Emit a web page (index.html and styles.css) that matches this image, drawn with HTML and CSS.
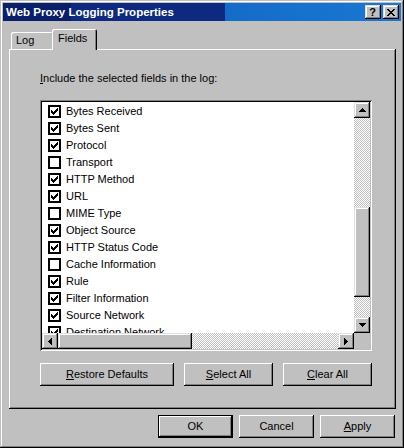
FILE: index.html
```html
<!DOCTYPE html>
<html>
<head>
<meta charset="utf-8">
<title>Web Proxy Logging Properties</title>
<link rel="stylesheet" href="styles.css">
</head>
<body>
<div class="window">
  <div class="titlebar">
    <span class="title">Web Proxy Logging Properties</span>
    <div class="tbtns">
      <div class="tbtn help">?</div>
      <div class="tbtn close"><svg width="8" height="7" viewBox="0 0 8 7" shape-rendering="crispEdges"><path d="M0 0h2v1H0z M6 0h2v1H6z M1 1h2v1H1z M5 1h2v1H5z M2 2h4v1H2z M3 3h2v1H3z M2 4h4v1H2z M1 5h2v1H1z M5 5h2v1H5z M0 6h2v1H0z M6 6h2v1H6z"/></svg></div>
    </div>
  </div>
  <div class="body">
    <div class="tabs">
      <div class="tab">Log</div>
      <div class="tab sel">Fields</div>
    </div>
    <div class="panel">
      <div class="label"><u>I</u>nclude the selected fields in the log:</div>
      <div class="listbox">
        <div class="items">
          <div class="item"><span class="cb on"></span>Bytes Received</div>
          <div class="item"><span class="cb on"></span>Bytes Sent</div>
          <div class="item"><span class="cb on"></span>Protocol</div>
          <div class="item"><span class="cb"></span>Transport</div>
          <div class="item"><span class="cb on"></span>HTTP Method</div>
          <div class="item"><span class="cb on"></span>URL</div>
          <div class="item"><span class="cb"></span>MIME Type</div>
          <div class="item"><span class="cb on"></span>Object Source</div>
          <div class="item"><span class="cb on"></span>HTTP Status Code</div>
          <div class="item"><span class="cb"></span>Cache Information</div>
          <div class="item"><span class="cb on"></span>Rule</div>
          <div class="item"><span class="cb on"></span>Filter Information</div>
          <div class="item"><span class="cb on"></span>Source Network</div>
          <div class="item"><span class="cb on"></span>Destination Network</div>
        </div>
        <div class="vscroll">
          <div class="sbtn"><svg width="7" height="4" viewBox="0 0 7 4" shape-rendering="crispEdges"><path d="M3 0h1v1h1v1h1v1h1v1H0V3h1V2h1V1h1z"/></svg></div>
          <div class="vtrack"><div class="vthumb"></div></div>
          <div class="sbtn"><svg width="7" height="4" viewBox="0 0 7 4" shape-rendering="crispEdges"><path d="M0 0h7v1H6v1H5v1H4v1H3V3H2V2H1V1H0z"/></svg></div>
        </div>
        <div class="hscroll">
          <div class="sbtn"><svg width="4" height="7" viewBox="0 0 4 7" shape-rendering="crispEdges"><path d="M3 0h1v7H3V6H2V5H1V4H0V3h1V2h1V1h1z"/></svg></div>
          <div class="htrack"><div class="hthumb"></div></div>
          <div class="sbtn"><svg width="4" height="7" viewBox="0 0 4 7" shape-rendering="crispEdges"><path d="M0 0h1v1h1v1h1v1h1v1H3v1H2v1H1v1H0z"/></svg></div>
        </div>
        <div class="corner"></div>
      </div>
      <div class="btnrow">
        <div class="btn wide"><u>R</u>estore Defaults</div>
        <div class="btn mid"><u>S</u>elect All</div>
        <div class="btn mid"><u>C</u>lear All</div>
      </div>
    </div>
    <div class="dlgbtns">
      <div class="btn dlg default">OK</div>
      <div class="btn dlg">Cancel</div>
      <div class="btn dlg"><u>A</u>pply</div>
    </div>
  </div>
</div>
</body>
</html>
```
FILE: styles.css
```css
* { box-sizing: border-box; margin: 0; padding: 0; }
html, body { width: 404px; height: 448px; overflow: hidden; background: #c0c0c0; }
body { font-family: "Liberation Sans", Arial, sans-serif; font-size: 11px; color: #000; }

.window {
  width: 404px; height: 448px; padding: 3px;
  background: #c0c0c0;
  display: flex; flex-direction: column;
  box-shadow: inset -1px -1px #000, inset 1px 1px #c0c0c0, inset -2px -2px #808080, inset 2px 2px #fff;
}

.titlebar {
  height: 18px; flex: none;
  display: flex; align-items: center; justify-content: space-between;
  padding: 0 2px 0 3px;
  background: linear-gradient(90deg, #0a1f6a 0, #0a1f6a 68px, #0d2a80 68px, #0d2a80 222px, #136cc8 222px, #1a78d2 100%);
}
.title { color: #fff; font-weight: bold; font-size: 11.5px; line-height: 18px; }
.tbtns { display: flex; gap: 2px; }
.tbtn {
  width: 16px; height: 14px; background: #c0c0c0;
  display: flex; align-items: center; justify-content: center;
  box-shadow: inset -1px -1px #000, inset 1px 1px #dfdfdf, inset -2px -2px #808080, inset 2px 2px #fff;
}
.tbtn.help { font-weight: bold; font-size: 11px; line-height: 14px; padding-right: 1px; }
.tbtn.close svg { margin-right: 1px; }

.body { flex: 1; padding: 8px 5px 0 6px; display: flex; flex-direction: column; }

.tabs { display: flex; align-items: flex-end; height: 20px; padding-left: 2px; position: relative; z-index: 1; flex: none; }
.tab {
  height: 17px; width: 43px; padding: 1px 0 0 5px; line-height: 14px;
  background: #c0c0c0;
  border-radius: 2px 2px 0 0;
  box-shadow: inset 1px 1px #fff, inset -1px 0 #000, inset -2px 0 #808080;
}
.tab.sel { height: 21px; width: 45px; margin-left: -2px; margin-bottom: -1px; padding: 2px 0 0 6px; }

.panel {
  height: 360px; flex: none;
  padding: 22px 24px 0 31px;
  box-shadow: inset -1px -1px #000, inset 1px 1px #fff, inset -2px -2px #808080;
}
.label { line-height: 14px; }

.listbox {
  margin-top: 15px; height: 251px; padding: 2px;
  background: #fff;
  display: grid; grid-template-columns: 1fr 16px; grid-template-rows: 1fr 16px;
  box-shadow: inset 1px 1px #808080, inset -1px -1px #fff, inset 2px 2px #000, inset -2px -2px #c0c0c0;
}
.items { overflow: hidden; padding-top: 1px; }
.item { height: 17px; display: flex; align-items: center; gap: 5px; padding-left: 6px; white-space: nowrap; line-height: 13px; }
.cb {
  width: 13px; height: 13px; flex: none; background: #fff;
  border: 2px solid #000;
  position: relative;
}
.cb.on::after {
  content: ""; position: absolute; left: 1px; top: 1px; width: 7px; height: 7px;
  background: url("data:image/svg+xml,%3Csvg xmlns='http://www.w3.org/2000/svg' width='7' height='7' shape-rendering='crispEdges'%3E%3Cpath d='M6 0h1v1h-1z M5 1h2v1h-2z M0 2h1v1h-1z M4 2h3v1h-3z M0 3h2v1h-2z M3 3h3v1h-3z M0 4h5v1h-5z M1 5h3v1h-3z M2 6h1v1h-1z'/%3E%3C/svg%3E") no-repeat;
}

.sbtn {
  width: 16px; height: 16px; flex: none; background: #c0c0c0;
  display: flex; align-items: center; justify-content: center;
  box-shadow: inset -1px -1px #000, inset 1px 1px #dfdfdf, inset -2px -2px #808080, inset 2px 2px #fff;
}
.vscroll { display: flex; flex-direction: column; }
.vtrack, .htrack {
  flex: 1;
  background: repeating-conic-gradient(#fff 0 25%, #c0c0c0 0 50%) 0 0 / 2px 2px;
  display: flex;
}
.vtrack { flex-direction: column; }
.vthumb, .hthumb {
  background: #c0c0c0;
  box-shadow: inset -1px -1px #000, inset 1px 1px #dfdfdf, inset -2px -2px #808080, inset 2px 2px #fff;
}
.vthumb { margin-top: 89px; height: 90px; }
.hscroll { display: flex; }
.hthumb { width: 134px; }
.corner { background: #c0c0c0; }

.btn {
  height: 23px; background: #c0c0c0;
  display: flex; align-items: center; justify-content: center;
  line-height: 13px;
  box-shadow: inset -1px -1px #000, inset 1px 1px #fff, inset -2px -2px #808080, inset 2px 2px #c0c0c0;
}
.btnrow { margin-top: 12px; display: flex; gap: 10px; }
.btn.wide { width: 134px; }
.btn.mid { width: 89px; }

.dlgbtns { margin-top: 6px; display: flex; justify-content: flex-end; gap: 6px; padding-right: 1px; }
.btn.dlg { width: 75px; }
.btn.default {
  box-shadow: inset 0 0 0 1px #000, inset -2px -2px #000, inset 2px 2px #fff, inset -3px -3px #808080;
}
```
